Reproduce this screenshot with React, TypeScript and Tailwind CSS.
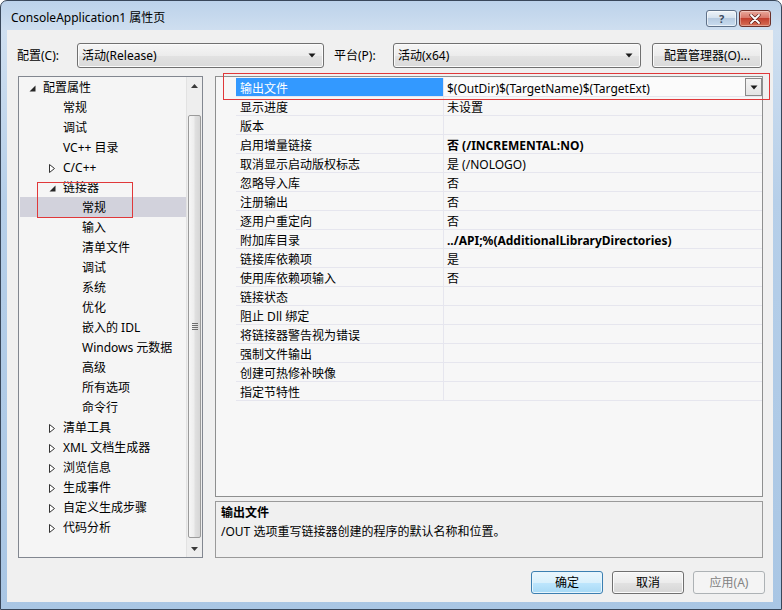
import React from 'react';

type TreeItem = { label: string; level: 0 | 1 | 2; tri?: 'open' | 'closed'; selected?: boolean };

const tree: TreeItem[] = [
  { label: '配置属性', level: 0, tri: 'open' },
  { label: '常规', level: 1 },
  { label: '调试', level: 1 },
  { label: 'VC++ 目录', level: 1 },
  { label: 'C/C++', level: 1, tri: 'closed' },
  { label: '链接器', level: 1, tri: 'open' },
  { label: '常规', level: 2, selected: true },
  { label: '输入', level: 2 },
  { label: '清单文件', level: 2 },
  { label: '调试', level: 2 },
  { label: '系统', level: 2 },
  { label: '优化', level: 2 },
  { label: '嵌入的 IDL', level: 2 },
  { label: 'Windows 元数据', level: 2 },
  { label: '高级', level: 2 },
  { label: '所有选项', level: 2 },
  { label: '命令行', level: 2 },
  { label: '清单工具', level: 1, tri: 'closed' },
  { label: 'XML 文档生成器', level: 1, tri: 'closed' },
  { label: '浏览信息', level: 1, tri: 'closed' },
  { label: '生成事件', level: 1, tri: 'closed' },
  { label: '自定义生成步骤', level: 1, tri: 'closed' },
  { label: '代码分析', level: 1, tri: 'closed' },
];

const rows: { name: string; value: string; bold?: boolean }[] = [
  { name: '输出文件', value: '$(OutDir)$(TargetName)$(TargetExt)' },
  { name: '显示进度', value: '未设置' },
  { name: '版本', value: '' },
  { name: '启用增量链接', value: '否 (/INCREMENTAL:NO)', bold: true },
  { name: '取消显示启动版权标志', value: '是 (/NOLOGO)' },
  { name: '忽略导入库', value: '否' },
  { name: '注册输出', value: '否' },
  { name: '逐用户重定向', value: '否' },
  { name: '附加库目录', value: '../API;%(AdditionalLibraryDirectories)', bold: true },
  { name: '链接库依赖项', value: '是' },
  { name: '使用库依赖项输入', value: '否' },
  { name: '链接状态', value: '' },
  { name: '阻止 Dll 绑定', value: '' },
  { name: '将链接器警告视为错误', value: '' },
  { name: '强制文件输出', value: '' },
  { name: '创建可热修补映像', value: '' },
  { name: '指定节特性', value: '' },
];

function DownArrow() {
  return (
    <svg width="8" height="5" viewBox="0 0 8 5" className="shrink-0">
      <polygon points="0.5,0.5 7.5,0.5 4,4.5" fill="#1a1a1a" />
    </svg>
  );
}

function Tri({ kind }: { kind?: 'open' | 'closed' }) {
  if (kind === 'open')
    return (
      <svg width="7" height="7" viewBox="0 0 7 7" className="shrink-0">
        <polygon points="6.5,0.5 6.5,6.5 0.5,6.5" fill="#262626" />
      </svg>
    );
  if (kind === 'closed')
    return (
      <svg width="6" height="9" viewBox="0 0 6 9" className="shrink-0">
        <polygon points="0.5,0.5 5.5,4.5 0.5,8.5" fill="#fff" stroke="#333" strokeWidth="1" />
      </svg>
    );
  return null;
}

function Combo({ text, w }: { text: string; w: string }) {
  return (
    <div
      className={`${w} h-[25px] rounded-[3px] border border-[#707070] bg-[linear-gradient(180deg,#f6f6f6_0%,#ececec_50%,#e2e2e2_51%,#dadada_100%)] flex items-center justify-between pl-[4px] pr-[7px] shadow-[inset_0_0_0_1px_#fbfbfb]`}
    >
      <span>{text}</span>
      <DownArrow />
    </div>
  );
}

export default function App() {
  return (
    <div className="w-[782px] h-[610px] flex flex-col rounded-t-[7px] border border-[#39475a] bg-[linear-gradient(180deg,#bcd2ea_0px,#cfdff0_30px,#b6cfe9_200px,#a9c6e4_610px)] overflow-hidden text-[12px] text-black font-['Noto_Sans','Noto_Sans_CJK_SC',sans-serif] leading-[16px]">
      {/* Title bar */}
      <div className="h-[29px] flex items-start justify-between pl-[10px] pr-[10px] shrink-0">
        <div className="pt-[9px] text-[12px] text-black">ConsoleApplication1 属性页</div>
        <div className="flex gap-[2px] pt-[9px]">
          <div className="w-[31px] h-[17px] rounded-[3px] border border-[#5f7189] bg-[linear-gradient(180deg,#eef3f9_0%,#d6e2ef_45%,#b7cbe1_50%,#c9dcef_100%)] flex items-center justify-center text-[11px] font-bold text-[#3b4a5e] leading-none shadow-[inset_0_0_0_1px_rgba(255,255,255,0.6)]">
            ?
          </div>
          <div className="w-[32px] h-[17px] rounded-[3px] border border-[#6b302a] bg-[linear-gradient(180deg,#e9a99c_0%,#d9786a_45%,#c2402f_50%,#d66f56_100%)] flex items-center justify-center shadow-[inset_0_0_0_1px_rgba(255,255,255,0.35)]">
            <svg width="12" height="10" viewBox="0 0 12 10">
              <path d="M2 1 L10 9 M10 1 L2 9" stroke="#5a1f18" strokeWidth="3.2" strokeLinecap="round" />
              <path d="M2 1 L10 9 M10 1 L2 9" stroke="#ffffff" strokeWidth="1.8" strokeLinecap="round" />
            </svg>
          </div>
        </div>
      </div>

      {/* Client */}
      <div className="flex-1 ml-[6px] mr-[8px] mb-[7px] bg-[#f0f0f0] flex flex-col">
        {/* toolbar */}
        <div className="mt-[13px] h-[25px] flex items-center pl-[10px]">
          <div className="w-[60px]">配置(C):</div>
          <Combo text="活动(Release)" w="w-[247px]" />
          <div className="ml-[10px] w-[59px]">平台(P):</div>
          <Combo text="活动(x64)" w="w-[248px]" />
          <div className="ml-[11px] w-[110px] h-[25px] rounded-[3px] border border-[#707070] bg-[linear-gradient(180deg,#f6f6f6_0%,#ececec_50%,#e2e2e2_51%,#dadada_100%)] flex items-center justify-center shadow-[inset_0_0_0_1px_#fbfbfb]">
            配置管理器(O)...
          </div>
        </div>

        {/* main */}
        <div className="mt-[8px] flex pl-[11px] gap-[12px]">
          {/* tree */}
          <div className="relative w-[185px] h-[482px] border border-[#828790] bg-[#f5f5f5] flex">
            <div className="flex-1 flex flex-col">
              {tree.map((t, i) => (
                <div
                  key={i}
                  className={`h-[20px] flex items-start pt-[3px] ${t.selected ? 'bg-[#d2d2dc] ml-[1px]' : ''} ${
                    t.level === 0 ? 'pl-[10px]' : t.level === 1 ? 'pl-[30px]' : t.selected ? 'pl-[48px]' : 'pl-[49px]'
                  }`}
                >
                  <div className="w-[14px] h-[16px] flex items-center">
                    <Tri kind={t.tri} />
                  </div>
                  <span className="whitespace-nowrap">{t.label}</span>
                </div>
              ))}
            </div>
            {/* scrollbar */}
            <div className="w-[16px] flex flex-col bg-[#eeeeee] border-l border-[#e2e2e2]">
              <div className="h-[17px] flex items-center justify-center">
                <svg width="7" height="4" viewBox="0 0 7 4">
                  <polygon points="0,4 7,4 3.5,0" fill="#3a3a3a" />
                </svg>
              </div>
              <div className="mt-[21px] h-[423px] mx-[1px] rounded-[2px] border border-[#9b9b9b] bg-[linear-gradient(90deg,#f6f6f6_0%,#eeeeee_45%,#e0e0e0_55%,#d6d6d6_100%)] flex items-center justify-center">
                <div className="flex flex-col gap-[1px]">
                  <div className="w-[6px] h-[1px] bg-[#6d6d6d]" />
                  <div className="w-[6px] h-[1px] bg-[#6d6d6d]" />
                  <div className="w-[6px] h-[1px] bg-[#6d6d6d]" />
                  <div className="w-[6px] h-[1px] bg-[#6d6d6d]" />
                </div>
              </div>
              <div className="flex-1" />
              <div className="h-[17px] flex items-center justify-center">
                <svg width="7" height="4" viewBox="0 0 7 4">
                  <polygon points="0,0 7,0 3.5,4" fill="#3a3a3a" />
                </svg>
              </div>
            </div>
            <div className="absolute left-[18px] top-[105px] w-[96px] h-[36px] border border-[#e0383a]" />
          </div>

          {/* right column */}
          <div className="relative w-[548px] flex flex-col">
            <div className="h-[421px] border border-[#8e8f8f] bg-[#f7f7f7] pt-[1px] flex flex-col">
              {rows.map((r, i) => (
                <div key={i} className="h-[19px] flex">
                  <div className="w-[20px]" />
                  <div
                    className={`w-[207px] flex items-start pt-[3px] pl-[4px] border-b border-[#e6e6ee] whitespace-nowrap ${
                      i === 0 ? 'bg-[#3399ff] text-white' : ''
                    }`}
                  >
                    {r.name}
                  </div>
                  <div
                    className={`flex-1 flex items-start justify-between pl-[3px] border-l border-b border-[#e6e6ee] whitespace-nowrap ${
                      r.bold ? 'font-bold' : ''
                    } ${i === 0 ? 'bg-[#fbfbfb]' : ''}`}
                  >
                    <span className="pt-[3px]">{r.value}</span>
                    {i === 0 && (
                      <div className="w-[17px] h-[18px] border border-[#8a8a8a] bg-[linear-gradient(180deg,#f4f4f4_0%,#e4e4e4_100%)] flex items-center justify-center">
                        <DownArrow />
                      </div>
                    )}
                  </div>
                </div>
              ))}
            </div>
            <div className="mt-[4px] h-[57px] border border-[#9a9a9a] bg-[#f0f0f0] px-[5px] pt-[1px] leading-[19px]">
              <div className="font-bold">输出文件</div>
              <div>/OUT 选项重写链接器创建的程序的默认名称和位置。</div>
            </div>
            <div className="absolute left-[8px] top-[-3px] w-[547px] h-[27px] border border-[#e0383a]" />
          </div>
        </div>

        {/* buttons */}
        <div className="mt-[13px] flex justify-end pr-[8px] gap-[9px]">
          <div className="w-[72px] h-[23px] rounded-[3px] border border-[#3c7fb1] bg-[linear-gradient(180deg,#eaf6fd_0%,#d9f0fc_50%,#bee6fd_51%,#a7d9f5_100%)] flex items-center justify-center shadow-[inset_0_0_0_1px_#e6f5fd]">
            确定
          </div>
          <div className="w-[72px] h-[23px] rounded-[3px] border border-[#707070] bg-[linear-gradient(180deg,#f6f6f6_0%,#ececec_50%,#e2e2e2_51%,#d6d6d6_100%)] flex items-center justify-center shadow-[inset_0_0_0_1px_#fbfbfb]">
            取消
          </div>
          <div className="w-[72px] h-[23px] rounded-[3px] border border-[#adb2b5] bg-[#f4f4f4] flex items-center justify-center text-[#838383]">
            应用(A)
          </div>
        </div>
      </div>
    </div>
  );
}
